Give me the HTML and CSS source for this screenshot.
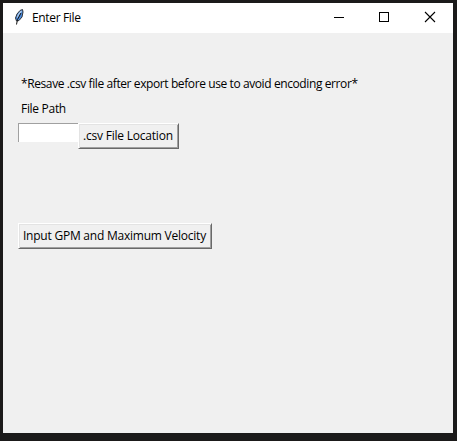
FILE: index.html
```html
<!DOCTYPE html>
<html lang="en">
<head>
<meta charset="utf-8">
<title>Enter File</title>
<link rel="stylesheet" href="styles.css">
</head>
<body>
<main class="window">
  <header class="titlebar">
    <svg class="feather" width="12" height="18" viewBox="0 0 12 18">
      <path d="M2.500 13 L1.500 10 L3 6 L6 2.500 L8.500 1.500 L9 4 L8 9 L5 12.500 Z" fill="#4a8ce0" stroke="#30343a"/>
      <path d="M3.500 9.500 L4.500 6.500 L7.500 3" fill="none" stroke="#b4cfec" stroke-width="1.2"/>
      <path d="M2.500 16.500 L3.500 11.500 L7 5" fill="none" stroke="#111" stroke-width="1"/>
    </svg>
    <h1 class="title"><span>Enter File</span></h1>
    <div class="controls">
      <svg width="46" height="30" viewBox="0 0 46 30" shape-rendering="crispEdges"><path d="M19 14.500h10" stroke="#000"/></svg>
      <svg width="46" height="30" viewBox="0 0 46 30" shape-rendering="crispEdges"><path d="M18.500 9.500h9v9h-9z" fill="none" stroke="#000"/></svg>
      <svg width="46" height="30" viewBox="0 0 46 30"><path d="M18 9l10 10M28 9l-10 10" stroke="#000" stroke-width="1.1"/></svg>
    </div>
  </header>
  <section class="content">
    <p class="note"><span>*Resave .csv file after export before use to avoid encoding error*</span></p>
    <label class="label" for="path"><span>File Path</span></label>
    <div class="file-row">
      <input class="entry" id="path" type="text">
      <button class="button browse"><span>.csv File Location</span></button>
    </div>
    <button class="button submit"><span>Input GPM and Maximum Velocity</span></button>
  </section>
</main>
</body>
</html>
```
FILE: styles.css
```css
* { box-sizing: border-box; }
body {
  margin: 0;
  height: 441px;
  padding: 3px 4px 8px 3px;
  background: #1b1a1a;
  overflow: hidden;
  font: 12px/16px "Open Sans", "Noto Sans", sans-serif;
  color: #000;
}
.window { width: 450px; height: 430px; background: #f0f0f0; }
.titlebar { display: flex; height: 30px; background: #fff; }
.feather { margin: 5px 0 0 11px; }
.title { margin: 7px 0 0 6px; font-size: 12px; font-weight: 400; white-space: nowrap; letter-spacing: -0.35px; }
.controls { display: flex; margin-left: auto; }
.content { display: flex; flex-direction: column; align-items: flex-start; padding: 43px 15px 0; }
.note, .label { margin: 0 0 0 3px; white-space: nowrap; }
.note { letter-spacing: -0.4px; }
.label { margin-top: 9px; letter-spacing: -0.3px; }
.file-row { display: flex; align-items: flex-start; margin-top: 6px; }
.entry {
  width: 60px;
  height: 19px;
  padding: 0 2px;
  background: #fff;
  border: 0;
  border-top: 1px solid #a0a0a0;
  border-left: 1px solid #a0a0a0;
  border-radius: 0;
  outline: 0;
}
.button {
  height: 26px;
  padding: 0 0 0 4px;
  border: 1px solid;
  border-color: #fff #696969 #696969 #fff;
  box-shadow: inset 1px 1px #e3e3e3, inset -1px -1px #a0a0a0;
  border-radius: 0;
  background: #f0f0f0;
  color: #000;
  font: inherit;
  text-align: left;
  white-space: nowrap;
}
.browse { width: 101px; letter-spacing: -0.21px; }
.submit { width: 194px; margin-top: 74px; letter-spacing: -0.23px; }
```
